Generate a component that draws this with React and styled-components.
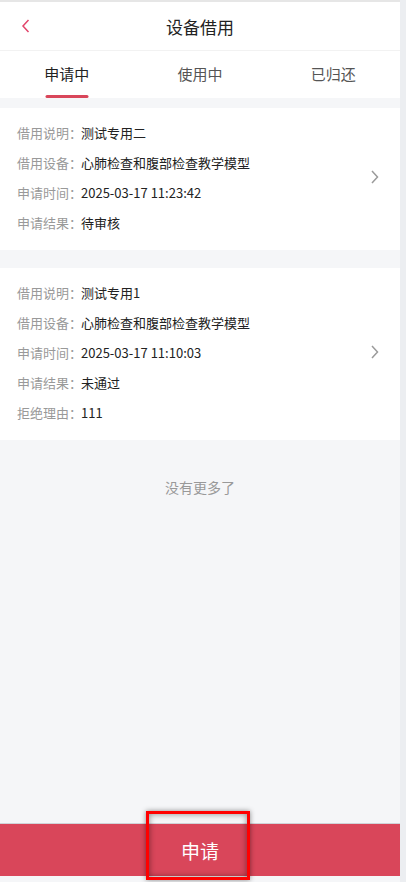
import React, { useState } from "react";
import styled, { createGlobalStyle } from "styled-components";

const GlobalStyle = createGlobalStyle`
  html, body {
    margin: 0;
    padding: 0;
    background: #f5f6f8;
  }
  * {
    box-sizing: border-box;
  }
`;

const Screen = styled.div`
  display: flex;
  width: 406px;
  height: 882px;
  overflow: hidden;
  font-family: "Noto Sans CJK SC", "Noto Sans", sans-serif;
  position: relative;
`;

const Page = styled.div`
  width: 400px;
  height: 100%;
  display: flex;
  flex-direction: column;
  background: #f5f6f8;
  border-top: 2px solid #e6e6e6;
`;

const Gutter = styled.div`
  width: 6px;
  background: #eceef1;
`;

const Header = styled.header`
  height: 49px;
  display: flex;
  align-items: center;
  justify-content: center;
  position: relative;
  background: #fff;
  border-bottom: 1px solid #f2f2f2;
`;

const BackButton = styled.button`
  position: absolute;
  left: 21px;
  top: 50%;
  transform: translateY(-50%);
  border: 0;
  background: none;
  padding: 0;
  display: flex;
`;

const Title = styled.h1`
  margin: 0;
  font-size: 17px;
  font-weight: 400;
  color: #222;
`;

const Tabs = styled.nav`
  display: grid;
  grid-template-columns: repeat(3, 1fr);
  height: 47px;
  background: #fff;
`;

const Tab = styled.div`
  display: flex;
  align-items: center;
  justify-content: center;
  position: relative;
  font-size: 15px;
  color: ${(p) => (p.$active ? "#222" : "#555")};
  padding-bottom: 2px;

  &::after {
    content: "";
    display: ${(p) => (p.$active ? "block" : "none")};
    position: absolute;
    bottom: 0;
    left: 50%;
    transform: translateX(-50%);
    width: 43px;
    height: 3px;
    border-radius: 2px;
    background: #d9465a;
  }
`;

const List = styled.main`
  flex: 1;
  display: flex;
  flex-direction: column;
  gap: 18px;
  padding-top: 10px;
`;

const Card = styled.div`
  display: flex;
  align-items: center;
  background: #fff;
  padding: 9px 20px 13px 17px;
`;

const Rows = styled.div`
  flex: 1;
  display: flex;
  flex-direction: column;
`;

const Row = styled.div`
  height: 30px;
  display: flex;
  align-items: center;
  font-size: 13px;
`;

const Label = styled.span`
  width: 64px;
  color: #999;
  white-space: nowrap;
`;

const Value = styled.span`
  color: #222;
`;

const NoMore = styled.div`
  text-align: center;
  font-size: 14px;
  color: #999;
  margin-top: 19px;
`;

const Footer = styled.div`
  height: 59px;
  padding-bottom: 6px;
  display: flex;
`;

const ApplyButton = styled.button`
  flex: 1;
  border: 0;
  border-top: 1px solid #d0d3d8;
  background: #d9465a;
  color: #fff;
  font-family: inherit;
  font-size: 19px;
`;

const Highlight = styled.div`
  position: absolute;
  left: 146px;
  top: 811px;
  width: 104px;
  height: 69px;
  border: 3px solid #ff0000;
  box-shadow: 0 0 5px rgba(0, 0, 0, 0.45), inset 0 0 6px rgba(0, 0, 0, 0.45);
  pointer-events: none;
`;

const ChevronLeft = () => (
  <svg width="10" height="16" viewBox="0 0 10 16">
    <path d="M7.5 2 L2 8 L7.5 14" fill="none" stroke="#e2456b" strokeWidth="1.5" />
  </svg>
);

const ChevronRight = () => (
  <svg width="10" height="16" viewBox="0 0 10 16">
    <path d="M2 2 L7.5 8 L2 14" fill="none" stroke="#9a9a9a" strokeWidth="1.5" />
  </svg>
);

const records = [
  [
    ["借用说明", "测试专用二"],
    ["借用设备", "心肺检查和腹部检查教学模型"],
    ["申请时间", "2025-03-17 11:23:42"],
    ["申请结果", "待审核"],
  ],
  [
    ["借用说明", "测试专用1"],
    ["借用设备", "心肺检查和腹部检查教学模型"],
    ["申请时间", "2025-03-17 11:10:03"],
    ["申请结果", "未通过"],
    ["拒绝理由", "111"],
  ],
];

const tabs = ["申请中", "使用中", "已归还"];

const App = () => {
  const [active, setActive] = useState(0);
  return (
    <>
      <GlobalStyle />
      <Screen>
        <Page>
          <Header>
            <BackButton>
              <ChevronLeft />
            </BackButton>
            <Title>设备借用</Title>
          </Header>
          <Tabs>
            {tabs.map((t, i) => (
              <Tab key={t} $active={i === active} onClick={() => setActive(i)}>
                {t}
              </Tab>
            ))}
          </Tabs>
          <List>
            {records.map((rec, i) => (
              <Card key={i}>
                <Rows>
                  {rec.map(([k, v]) => (
                    <Row key={k}>
                      <Label>{k}：</Label>
                      <Value>{v}</Value>
                    </Row>
                  ))}
                </Rows>
                <ChevronRight />
              </Card>
            ))}
            <NoMore>没有更多了</NoMore>
          </List>
          <Footer>
            <ApplyButton>申请</ApplyButton>
          </Footer>
        </Page>
        <Gutter />
        <Highlight />
      </Screen>
    </>
  );
};

export default App;
